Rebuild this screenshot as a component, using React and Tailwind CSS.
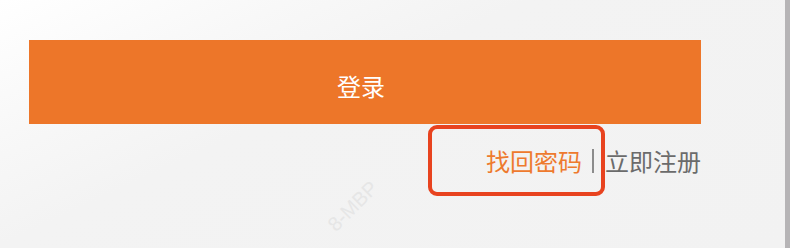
export default function App() {
  return (
    <div className="flex w-[790px] h-[248px] overflow-hidden font-['Noto_Sans_CJK_SC','Noto_Sans',sans-serif]">
      {/* login area */}
      <div className="relative flex-1 pt-[40px] pl-[29px] bg-[linear-gradient(155deg,#ffffff_0%,#f8f8f8_22%,#f3f3f3_40%,#f2f2f2_100%)]">
        <button className="flex items-center justify-center w-[672px] h-[84px] pt-[8px] pr-[8px] bg-[#ed7629] text-white text-[24px] leading-none">
          登录
        </button>

        <div className="flex w-[672px] justify-end items-center mt-[1px] text-[24px] leading-none">
          <div className="flex items-center justify-end w-[177px] h-[71px] pr-[7px] pt-[1px] border-4 border-[#e8431f] rounded-[9px]">
            <a href="#" className="text-[#ee7a2e]">找回密码</a>
            <span className="ml-[10px] w-[2px] h-[24px] bg-[#8c8c8c]" />
          </div>
          <a href="#" className="text-[#6b6b6b]">立即注册</a>
        </div>

        {/* watermark */}
        <span className="absolute left-[322px] top-[196px] -rotate-45 text-[20px] leading-none text-[#e6e6e6] font-['Liberation_Sans',sans-serif] select-none">
          8-MBP
        </span>
      </div>

      {/* window edge */}
      <div className="w-[5px] bg-[#b6b4b6]" />
    </div>
  );
}
